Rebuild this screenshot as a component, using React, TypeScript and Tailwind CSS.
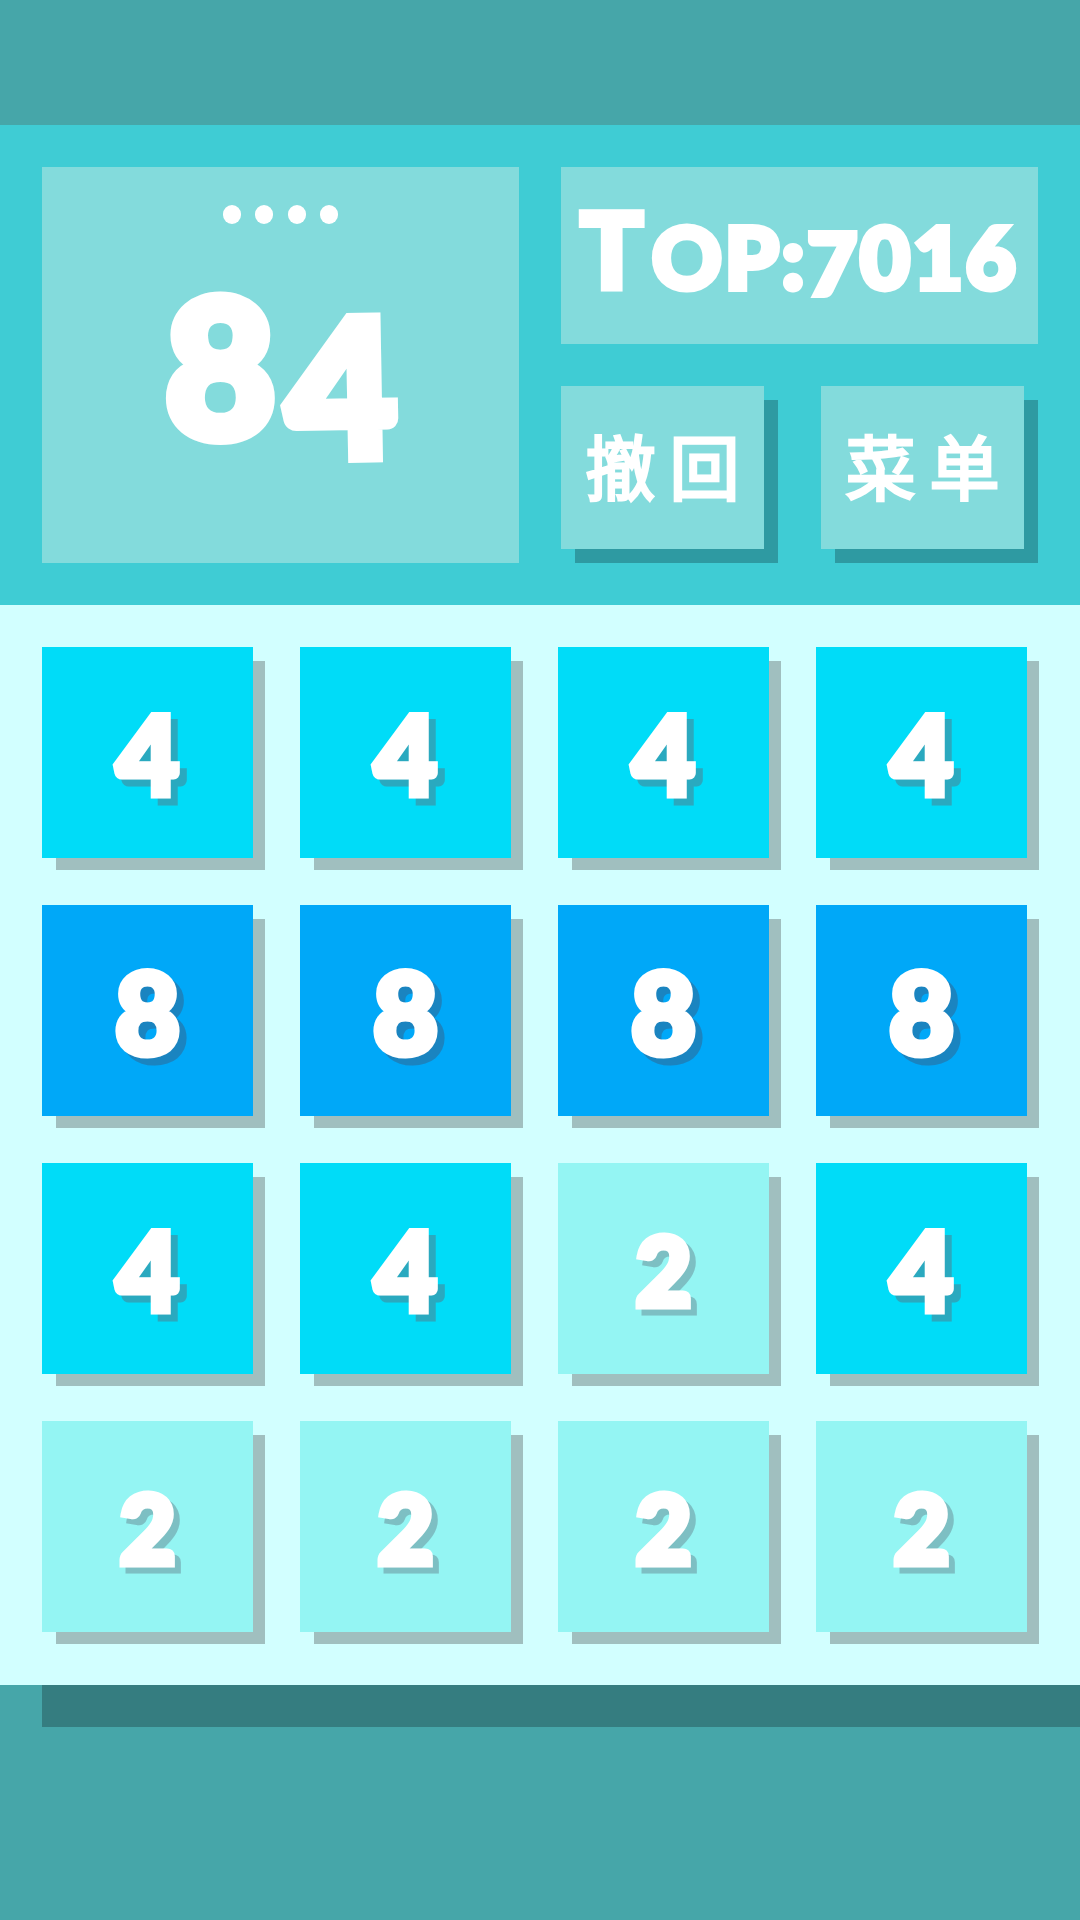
const tiles = [4, 4, 4, 4, 8, 8, 8, 8, 4, 4, 2, 4, 2, 2, 2, 2];

const tileStyles: Record<number, string> = {
  2: "bg-[#94f5f3] text-[96px]",
  4: "bg-[#00dcf8] text-[108px]",
  8: "bg-[#00a8f8] text-[112px]",
};

const digitShadows: Record<number, string> = {
  2: "drop-shadow-[6px_6px_0_#7dbfc3]",
  4: "drop-shadow-[7px_7px_0_#2aa9bf]",
  8: "drop-shadow-[7px_7px_0_#1a84c0]",
};

function Tile({ value }: { value: number }) {
  return (
    <div
      className={`w-[211px] h-[211px] flex items-center justify-center text-white leading-none font-black [-webkit-text-stroke:7px_white] shadow-[13px_13px_0_-1px_#a0bfbf] ${tileStyles[value]}`}
    >
      <span className={digitShadows[value]}>{value}</span>
    </div>
  );
}

function MenuButton({ label }: { label: string }) {
  return (
    <div className="w-[203px] h-[163px] flex items-center justify-center bg-[#83dbdc] shadow-[14px_14px_0_#2e9aa2] pb-[6px] text-white text-[70px] leading-none font-normal tracking-[14px] indent-[14px] [-webkit-text-stroke:3px_white] font-['Noto_Sans_CJK_SC',sans-serif]">
      {label}
    </div>
  );
}

export default function App() {
  return (
    <div className="w-[1080px] h-[1920px] flex flex-col overflow-hidden bg-[#46a6a9] font-['Lato','Liberation_Sans',sans-serif]">
      <div className="h-[125px] bg-[#46a6a9]" />

      <div className="h-[480px] flex justify-between bg-[#3fccd4] px-[42px] pt-[42px]">
        <div className="w-[477px] h-[396px] flex flex-col items-center bg-[#83dbdc] pt-[38px]">
          <div className="flex gap-[14.5px]">
            <div className="w-[18px] h-[19px] rounded-full bg-white" />
            <div className="w-[18px] h-[19px] rounded-full bg-white" />
            <div className="w-[18px] h-[19px] rounded-full bg-white" />
            <div className="w-[18px] h-[19px] rounded-full bg-white" />
          </div>
          <div className="flex items-start gap-[10px] mt-[44px] text-white font-black leading-none text-[190px] [-webkit-text-stroke:12px_white]">
            <span>8</span>
            <span className="-rotate-1 translate-y-[20px]">4</span>
          </div>
        </div>

        <div className="w-[477px] flex flex-col gap-[42px]">
          <div className="h-[177px] flex items-center justify-center bg-[#83dbdc] text-white font-black leading-none text-[86px] tracking-[3px] [-webkit-text-stroke:6px_white]">
            <span className="text-[104px] pr-[6px] -translate-y-[7px]">T</span>
            <span>OP:</span>
            <span className="translate-y-[6px]">7</span>
            <span>016</span>
          </div>
          <div className="flex justify-between pr-[14px]">
            <MenuButton label="撤回" />
            <MenuButton label="菜单" />
          </div>
        </div>
      </div>

      <div className="h-[1080px] grid grid-cols-[repeat(4,211px)] grid-rows-[repeat(4,211px)] gap-[47px] bg-[#d2ffff] pl-[42px] pt-[42px]">
        {tiles.map((value, i) => (
          <Tile key={i} value={value} />
        ))}
      </div>

      <div className="h-[42px] ml-[42px] bg-[#357d80]" />
    </div>
  );
}
